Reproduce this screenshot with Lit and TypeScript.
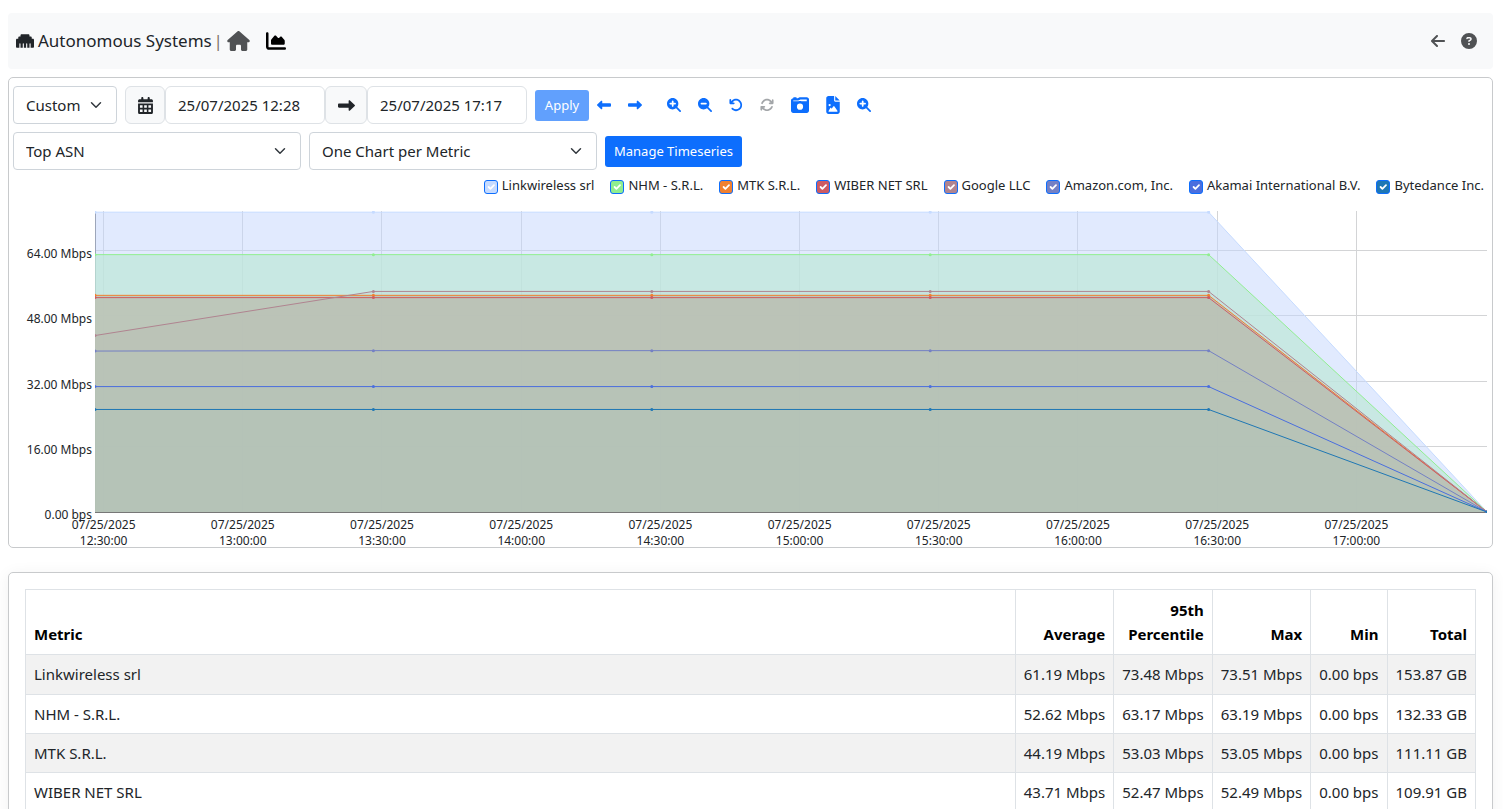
import { LitElement, html, svg, css } from "lit";
import { customElement, property } from "lit/decorators.js";

interface Icon {
  box: string;
  d: string;
}

const LENS =
  "M416 208c0 45.9-14.9 88.3-40 122.7L502.6 457.4c12.5 12.5 12.5 32.8 0 45.3s-32.8 12.5-45.3 0L330.7 376c-34.4 25.2-76.8 40-122.7 40C93.1 416 0 322.9 0 208S93.1 0 208 0S416 93.1 416 208z";

const ICONS: Record<string, Icon> = {
  ethernet: {
    box: "0 64 512 384",
    d: "M0 224V416c0 17.7 14.3 32 32 32H96V336c0-8.8 7.2-16 16-16s16 7.2 16 16V448h64V336c0-8.8 7.2-16 16-16s16 7.2 16 16V448h64V336c0-8.8 7.2-16 16-16s16 7.2 16 16V448h64V336c0-8.8 7.2-16 16-16s16 7.2 16 16V448h64c17.7 0 32-14.3 32-32V224c0-17.7-14.3-32-32-32H448V160c0-17.7-14.3-32-32-32H384V96c0-17.7-14.3-32-32-32H160c-17.7 0-32 14.3-32 32v32H96c-17.7 0-32 14.3-32 32v32H32c-17.7 0-32 14.3-32 32z",
  },
  house: {
    box: "0 0 576 512",
    d: "M575.8 255.5c0 18-15 32.1-32 32.1h-32l.7 160.2c0 2.7-.2 5.4-.5 8.1V472c0 22.1-17.9 40-40 40H456c-1.1 0-2.2 0-3.3-.1c-1.4 .1-2.8 .1-4.2 .1H416 392c-22.1 0-40-17.9-40-40V448 384c0-17.7-14.3-32-32-32H256c-17.7 0-32 14.3-32 32v64 24c0 22.1-17.9 40-40 40H160 128.1c-1.5 0-3-.1-4.5-.2c-1.2 .1-2.4 .2-3.6 .2H104c-22.1 0-40-17.9-40-40V360c0-.9 0-1.9 .1-2.8V287.6H32c-18 0-32-14-32-32.1c0-9 3-17 10-24L266.4 8c7-7 15-8 22-8s15 2 21 7L564.8 231.5c8 7 12 15 11 24z",
  },
  chart: {
    box: "0 0 512 512",
    d: "M64 64c0-17.7-14.3-32-32-32S0 46.3 0 64V400c0 44.2 35.8 80 80 80H480c17.7 0 32-14.3 32-32s-14.3-32-32-32H80c-8.8 0-16-7.2-16-16V64zm96 288H448c17.7 0 32-14.3 32-32V251.8c0-7.6-2.7-15-7.7-20.8l-65.8-76.8c-12.1-14.2-33.7-15-46.9-1.8l-21 21c-10 10-26.4 9.2-35.4-1.6l-39.2-47c-12.6-15.1-35.7-15.4-48.7-.6L135.9 215c-5.1 5.8-7.9 13.3-7.9 21.1v84c0 17.7 14.3 32 32 32z",
  },
  back: {
    box: "0 0 448 512",
    d: "M9.4 233.4c-12.5 12.5-12.5 32.8 0 45.3l160 160c12.5 12.5 32.8 12.5 45.3 0s12.5-32.8 0-45.3L109.2 288 416 288c17.7 0 32-14.3 32-32s-14.3-32-32-32l-306.7 0L214.6 118.6c12.5-12.5 12.5-32.8 0-45.3s-32.8-12.5-45.3 0l-160 160z",
  },
  help: {
    box: "0 0 512 512",
    d: "M256 512A256 256 0 1 0 256 0a256 256 0 1 0 0 512zM169.8 165.3c7.9-22.3 29.1-37.3 52.8-37.3h58.3c34.9 0 63.1 28.3 63.1 63.1c0 22.6-12.1 43.5-31.7 54.8L280 264.4c-.2 13-10.9 23.6-24 23.6c-13.3 0-24-10.7-24-24V250.5c0-8.6 4.6-16.5 12.1-20.8l44.3-25.4c4.7-2.7 7.6-7.7 7.6-13.1c0-8.4-6.8-15.1-15.1-15.1H222.6c-3.4 0-6.4 2.1-7.5 5.3l-.4 1.2c-4.4 12.5-18.2 19-30.6 14.6s-19-18.2-14.6-30.6l.4-1.2zM224 352a32 32 0 1 1 64 0 32 32 0 1 1 -64 0z",
  },
  calendar: {
    box: "0 0 448 512",
    d: "M128 0c17.7 0 32 14.3 32 32V64H288V32c0-17.7 14.3-32 32-32s32 14.3 32 32V64h48c26.5 0 48 21.5 48 48v48H0V112C0 85.5 21.5 64 48 64H96V32c0-17.7 14.3-32 32-32zM0 192H448V464c0 26.5-21.5 48-48 48H48c-26.5 0-48-21.5-48-48V192zM56 252v68h80v-68zM184 252v68h80v-68zM312 252v68h80v-68zM56 380v68h80v-68zM184 380v68h80v-68zM312 380v68h80v-68z",
  },
  left: {
    box: "0 0 512 512",
    d: "M177.5 414c-8.8 3.8-19 2-26-4.6l-144-136C2.7 268.9 0 262.6 0 256s2.7-12.9 7.5-17.4l144-136c7-6.6 17.2-8.4 26-4.6s14.5 12.5 14.5 22l0 72 288 0c17.7 0 32 14.3 32 32l0 64c0 17.7-14.3 32-32 32l-288 0 0 72c0 9.6-5.7 18.2-14.5 22z",
  },
  right: {
    box: "0 0 512 512",
    d: "M334.5 414c8.8 3.8 19 2 26-4.6l144-136c4.8-4.5 7.5-10.8 7.5-17.4s-2.7-12.9-7.5-17.4l-144-136c-7-6.6-17.2-8.4-26-4.6s-14.5 12.5-14.5 22l0 72L32 192c-17.7 0-32 14.3-32 32l0 64c0 17.7 14.3 32 32 32l288 0 0 72c0 9.6 5.7 18.2 14.5 22z",
  },
  zoomIn: {
    box: "0 0 512 512",
    d: LENS + "M176 296c0 17 14 32 32 32s32-15 32-32V240h56c17 0 32-14 32-32s-15-32-32-32H240V120c0-17-14-32-32-32s-32 15-32 32v56H120c-17 0-32 14-32 32s15 32 32 32h56v56z",
  },
  zoomOut: {
    box: "0 0 512 512",
    d: LENS + "M126 176c-17 0-32 14-32 32s15 32 32 32H290c17 0 32-14 32-32s-15-32-32-32H126z",
  },
  undo: {
    box: "0 0 512 512",
    d: "M125.7 160H176c17.7 0 32 14.3 32 32s-14.3 32-32 32H48c-17.7 0-32-14.3-32-32V64c0-17.7 14.3-32 32-32s32 14.3 32 32v51.2L97.6 97.6c87.5-87.5 229.3-87.5 316.8 0s87.5 229.3 0 316.8s-229.3 87.5-316.8 0c-12.5-12.5-12.5-32.8 0-45.3s32.8-12.5 45.3 0c62.5 62.5 163.8 62.5 226.3 0s62.5-163.8 0-226.3s-163.8-62.5-226.3 0L125.7 160z",
  },
  refresh: {
    box: "0 0 512 512",
    d: "M105.1 202.6c7.7-21.8 20.2-42.3 37.8-59.8c62.5-62.5 163.8-62.5 226.3 0L386.3 160H352c-17.7 0-32 14.3-32 32s14.3 32 32 32H463.5h.4c17.7 0 32-14.3 32-32V80c0-17.7-14.3-32-32-32s-32 14.3-32 32v35.2L414.4 97.6c-87.5-87.5-229.3-87.5-316.8 0C73.2 122 55.6 150.7 44.8 181.4c-5.9 16.7 2.9 34.9 19.5 40.8s34.9-2.9 40.8-19.5zM39 289.3c-5 1.5-9.8 4.2-13.7 8.2c-4 4-6.7 8.8-8.1 14c-.3 1.2-.6 2.5-.8 3.8c-.3 1.7-.4 3.4-.4 5.1V432c0 17.7 14.3 32 32 32s32-14.3 32-32V396.9l17.6 17.5c87.5 87.4 229.3 87.4 316.7 0c24.4-24.4 42.1-53.1 52.9-83.7c5.9-16.7-2.9-34.9-19.5-40.8s-34.9 2.9-40.8 19.5c-7.7 21.8-20.2 42.3-37.8 59.8c-62.5 62.5-163.8 62.5-226.3 0L125.6 352H160c17.7 0 32-14.3 32-32s-14.3-32-32-32H48.4c-1.6 0-3.2 .1-4.8 .3s-3.1 .5-4.6 1z",
  },
  camera: {
    box: "0 32 512 448",
    d: "M220.6 121.2L271.1 96 448 96v50H300c-14-4-28-6-44-6s-30 2-44 6H64V128H192c9.9 0 19.7-2.3 28.6-6.8zM0 128V416c0 35.3 28.7 64 64 64H448c35.3 0 64-28.7 64-64V96c0-35.3-28.7-64-64-64H271.1c-9.9 0-19.7 2.3-28.6 6.8L192 64H160V48c0-8.8-7.2-16-16-16H80c-8.8 0-16 7.2-16 16V64C28.7 64 0 92.7 0 128zM168 304a88 88 0 1 1 176 0 88 88 0 1 1 -176 0z",
  },
  image: {
    box: "0 0 384 512",
    d: "M64 0C28.7 0 0 28.7 0 64V448c0 35.3 28.7 64 64 64H320c35.3 0 64-28.7 64-64V160H256c-17.7 0-32-14.3-32-32V0H64zM256 0V128H384L256 0zM64 256a32 32 0 1 1 64 0 32 32 0 1 1 -64 0zm152 32c5.3 0 10.2 2.6 13.2 6.9l88 128c3.4 4.9 3.7 11.3 1 16.5s-8.2 8.6-14.2 8.6H216 176 128 80c-5.8 0-11.1-3.1-13.9-8.1s-2.8-11.2 .2-16.1l48-80c2.9-4.8 8.1-7.8 13.7-7.8s10.8 2.9 13.7 7.8l12.8 21.4 48.3-70.2c3-4.3 7.9-6.9 13.2-6.9z",
  },
};

@customElement("app-icon")
class AppIcon extends LitElement {
  @property() name = "";
  @property({ type: Number }) width = 14;
  @property({ type: Number }) height = 14;

  static styles = css`
    :host {
      display: inline-flex;
    }
    .glyph {
      display: block;
      fill: currentColor;
      fill-rule: evenodd;
    }
  `;

  render() {
    const icon = ICONS[this.name];
    return html`<svg class="glyph" width=${this.width} height=${this.height} viewBox=${icon?.box ?? "0 0 1 1"} aria-hidden="true">
      <path d=${icon?.d ?? ""}></path>
    </svg>`;
  }
}

interface Series {
  name: string;
  color: string;
  values: number[];
}

const level = (first: number, rest = first) => [first, rest, rest, rest, rest, 0];

const SERIES: Series[] = [
  { name: "Linkwireless srl", color: "#c6dbff", values: level(73.4) },
  { name: "NHM - S.R.L.", color: "#90ee90", values: level(63.0) },
  { name: "MTK S.R.L.", color: "#f08030", values: level(53.04) },
  { name: "WIBER NET SRL", color: "#cd5b63", values: level(52.48) },
  { name: "Google LLC", color: "#b08490", values: level(43.2, 54) },
  { name: "Amazon.com, Inc.", color: "#7480c4", values: level(39.4, 39.5) },
  { name: "Akamai International B.V.", color: "#4a6ede", values: level(30.7) },
  { name: "Bytedance Inc.", color: "#1f77b4", values: level(25.1) },
];

const TICKS = ["12:30:00", "13:00:00", "13:30:00", "14:00:00", "14:30:00", "15:00:00", "15:30:00", "16:00:00", "16:30:00", "17:00:00"];
const SCALE = ["64.00 Mbps", "48.00 Mbps", "32.00 Mbps", "16.00 Mbps", "0.00 bps"];

const PLOT_W = 1392;
const PLOT_H = 302;
const xAt = (i: number) => (i * PLOT_W) / 5;
const yAt = (mbps: number) => PLOT_H - 1 - mbps * 4.085;

@customElement("traffic-chart")
class TrafficChart extends LitElement {
  static styles = css`
    :host {
      display: block;
      color: #212529;
    }
    .body {
      display: grid;
      grid-template-columns: 86px minmax(0, 1fr);
      padding-right: 5px;
    }
    .scale {
      display: flex;
      flex-direction: column;
      justify-content: space-between;
      align-items: flex-end;
      padding: 35px 3px 0 0;
      margin-bottom: -10px;
      font-size: 12px;
      line-height: 16px;
    }
    .plot {
      display: block;
      width: 100%;
      height: 302px;
    }
    .plot * {
      vector-effect: non-scaling-stroke;
    }
    .grid {
      stroke: #d3d4d6;
    }
    .axis {
      stroke: #777;
    }
    .line {
      fill: none;
      stroke-width: 1;
    }
    .dot {
      stroke-width: 3;
      stroke-linecap: round;
    }
    .area0 {
      fill: #c3d5fe;
      fill-opacity: 0.5;
    }
    .area1 {
      fill: #bde7d7;
      fill-opacity: 0.7;
    }
    .area2 {
      fill: #bec8ba;
      fill-opacity: 0.92;
    }
    .area3,
    .area4 {
      fill: #a09080;
      fill-opacity: 0.05;
    }
    .area5,
    .area6,
    .area7 {
      fill: #a0c4b4;
      fill-opacity: 0.06;
    }
    .times {
      display: grid;
      grid-template-columns: repeat(10, 1fr);
      padding: 4px 66px 0 25px;
      margin-bottom: -2px;
      text-align: center;
      font-size: 12px;
      line-height: 16px;
    }
    .time {
      display: flex;
      flex-direction: column;
    }
  `;

  private outline(s: Series) {
    return s.values.map((v, i) => `${xAt(i)},${yAt(v).toFixed(2)}`).join(" ");
  }

  render() {
    return html`
      <div class="body">
        <div class="scale">${SCALE.map((t) => html`<span>${t}</span>`)}</div>
        <svg class="plot" viewBox="0 0 ${PLOT_W} ${PLOT_H}" preserveAspectRatio="none" role="img" aria-label="Traffic per autonomous system">
          ${TICKS.map((_, i) => {
            const x = Math.round(8 + i * 139.2) + 0.5;
            return svg`<line class="grid" x1=${x} x2=${x} y1="0" y2=${PLOT_H}></line>`;
          })}
          ${[64, 48, 32, 16].map((v) => {
            const y = Math.floor(yAt(v)) + 0.5;
            return svg`<line class="grid" x1="0" x2=${PLOT_W} y1=${y} y2=${y}></line>`;
          })}
          <line class="axis" x1="0.5" x2="0.5" y1="0" y2=${PLOT_H}></line>
          ${SERIES.map(
            (s, i) => svg`<polygon class=${"area" + i} points=${`0,${PLOT_H - 1} ${this.outline(s)}`}></polygon>`
          )}
          <line class="axis" x1="0" x2=${PLOT_W} y1=${PLOT_H - 0.5} y2=${PLOT_H - 0.5}></line>
          ${SERIES.map(
            (s) => svg`<polyline class="line" stroke=${s.color} points=${this.outline(s)}></polyline>
              ${s.values.map(
                (v, i) => svg`<line class="dot" stroke=${s.color} x1=${xAt(i)} x2=${xAt(i)} y1=${yAt(v)} y2=${yAt(v)}></line>`
              )}`
          )}
        </svg>
      </div>
      <div class="times">
        ${TICKS.map((t) => html`<div class="time"><span>07/25/2025</span><span>${t}</span></div>`)}
      </div>
    `;
  }
}

const COLUMNS = ["Average", "95th Percentile", "Max", "Min", "Total"];
const ROWS = [
  ["Linkwireless srl", "61.19 Mbps", "73.48 Mbps", "73.51 Mbps", "0.00 bps", "153.87 GB"],
  ["NHM - S.R.L.", "52.62 Mbps", "63.17 Mbps", "63.19 Mbps", "0.00 bps", "132.33 GB"],
  ["MTK S.R.L.", "44.19 Mbps", "53.03 Mbps", "53.05 Mbps", "0.00 bps", "111.11 GB"],
  ["WIBER NET SRL", "43.71 Mbps", "52.47 Mbps", "52.49 Mbps", "0.00 bps", "109.91 GB"],
];

const TOOLS: { icon: string; label: string; w: number; h: number; off?: boolean }[] = [
  { icon: "zoomIn", label: "Zoom in", w: 14, h: 14 },
  { icon: "zoomOut", label: "Zoom out", w: 14, h: 14 },
  { icon: "undo", label: "Undo", w: 14, h: 14 },
  { icon: "refresh", label: "Refresh", w: 14, h: 14, off: true },
  { icon: "camera", label: "Snapshots", w: 18, h: 16 },
  { icon: "image", label: "Download image", w: 14, h: 18 },
  { icon: "zoomIn", label: "Explore", w: 14, h: 14 },
];

@customElement("app-root")
class AppRoot extends LitElement {
  static styles = css`
    :host {
      display: block;
      height: 100vh;
      overflow: hidden;
      box-sizing: border-box;
      padding: 13px 10px 0 8px;
      background: #fff;
      color: #212529;
      font-family: "Noto Sans", "Open Sans", sans-serif;
      font-size: 15px;
      line-height: 24px;
    }
    * {
      box-sizing: border-box;
    }
    button,
    input,
    select {
      margin: 0;
      font: inherit;
      color: inherit;
    }
    .header {
      display: flex;
      align-items: center;
      justify-content: space-between;
      height: 56px;
      padding: 0 16px 0 8px;
      border-radius: 4px;
      background: #f8f9fa;
    }
    .title,
    .links {
      display: flex;
      align-items: center;
    }
    .name {
      margin: 0 2px 0 4px;
      font-size: 17px;
      font-weight: 400;
    }
    .divider {
      margin-right: 4px;
      font-size: 16px;
      color: #7b6a5e;
    }
    .link {
      display: inline-flex;
      color: #505254;
    }
    .current {
      margin-left: 16px;
      color: #000;
    }
    .links {
      gap: 16px;
    }
    .card {
      border: 1px solid #c8cacc;
      border-radius: 5px;
      background: #fff;
    }
    .chart {
      margin-top: 8px;
    }
    .row {
      display: flex;
      align-items: center;
      gap: 8px;
      padding: 8px 4px 0;
    }
    .group {
      display: flex;
    }
    .select {
      appearance: none;
      height: 38px;
      padding: 0 36px 0 12px;
      border: 1px solid #ced4da;
      border-radius: 4px;
      background: #fff
        url("data:image/svg+xml,%3Csvg xmlns='http://www.w3.org/2000/svg' viewBox='0 0 16 16'%3E%3Cpath fill='none' stroke='%23343a40' stroke-linecap='round' stroke-linejoin='round' stroke-width='2' d='m2 5 6 6 6-6'/%3E%3C/svg%3E")
        no-repeat right 12px center / 16px 12px;
    }
    .short {
      width: 104px;
    }
    .wide {
      width: 288px;
    }
    .addon {
      display: flex;
      align-items: center;
      justify-content: center;
      width: 42px;
      height: 38px;
      border: 1px solid #dee2e6;
      border-radius: 6px;
      background: #f8f9fa;
    }
    .addon.first {
      width: 40px;
    }
    .date {
      width: 160px;
      height: 38px;
      padding: 0 12px;
      border: 1px solid #dee2e6;
      border-radius: 6px;
      background: #fff;
    }
    .btn {
      min-width: 54px;
      height: 31px;
      padding: 0 9px;
      border: 0;
      border-radius: 3px;
      background: #0d6efd;
      color: #fff;
      font-size: 13px;
    }
    .btn:disabled {
      opacity: 0.65;
    }
    .tools {
      display: flex;
      align-items: center;
      gap: 17px;
    }
    .shift {
      padding-right: 8px;
    }
    .tool {
      display: inline-flex;
      padding: 0;
      border: 0;
      background: none;
      color: #0d6efd;
    }
    .tool:disabled {
      color: #a3a6a9;
    }
    .legend {
      display: flex;
      flex-wrap: wrap;
      justify-content: flex-end;
      gap: 0 16px;
      padding: 6px 8px 16px;
      font-size: 13px;
      line-height: 19px;
    }
    .entry {
      display: flex;
      align-items: center;
      gap: 4px;
    }
    .tick {
      appearance: none;
      width: 14px;
      height: 14px;
      margin-top: 2px;
      border: 1px solid #0d6efd;
      border-radius: 3px;
      background: url("data:image/svg+xml,%3Csvg xmlns='http://www.w3.org/2000/svg' viewBox='0 0 20 20'%3E%3Cpath fill='none' stroke='%23fff' stroke-linecap='round' stroke-linejoin='round' stroke-width='3' d='m6 10 3 3 6-6'/%3E%3C/svg%3E")
        center / 12px 12px no-repeat;
    }
    .summary {
      margin-top: 24px;
      padding: 16px;
      box-shadow: 0 2px 16px rgba(0, 0, 0, 0.06);
    }
    .table {
      width: 100%;
      border-collapse: collapse;
    }
    .table th,
    .table td {
      border: 1px solid #dee2e6;
      padding: 7px 8px;
      text-align: right;
      white-space: nowrap;
    }
    .table th {
      padding: 8px;
      vertical-align: bottom;
      white-space: normal;
      color: #000;
      font-weight: 700;
    }
    .table .metric {
      width: 100%;
      text-align: left;
    }
    .table tbody tr:nth-child(odd) {
      background: #f2f2f2;
    }
    .table tbody tr:first-child td {
      padding-bottom: 8px;
    }
  `;

  private tool(icon: string, label: string, w = 14, h = 14, off = false) {
    return html`<button class="tool" type="button" aria-label=${label} ?disabled=${off}>
      <app-icon name=${icon} width=${w} height=${h}></app-icon>
    </button>`;
  }

  render() {
    return html`
      <header class="header">
        <div class="title">
          <app-icon name="ethernet" width="18" height="14"></app-icon>
          <h1 class="name">Autonomous Systems</h1>
          <span class="divider">|</span>
          <a class="link" href="#" aria-label="Home"><app-icon name="house" width="23" height="20"></app-icon></a>
          <a class="link current" href="#" aria-label="Chart"><app-icon name="chart" width="20" height="20"></app-icon></a>
        </div>
        <nav class="links">
          <a class="link" href="#" aria-label="Back"><app-icon name="back" width="14" height="16"></app-icon></a>
          <a class="link" href="#" aria-label="Help"><app-icon name="help" width="16" height="16"></app-icon></a>
        </nav>
      </header>

      <section class="card chart">
        <div class="row">
          <select class="select short" aria-label="Time range"><option>Custom</option></select>
          <div class="group">
            <span class="addon first"><app-icon name="calendar" width="15" height="17"></app-icon></span>
            <input class="date" type="text" aria-label="Begin" value="25/07/2025 12:28" />
            <span class="addon"><app-icon name="right" width="17" height="17"></app-icon></span>
            <input class="date" type="text" aria-label="End" value="25/07/2025 17:17" />
          </div>
          <button class="btn" type="button" disabled>Apply</button>
          <div class="tools">
            <div class="tools shift">${this.tool("left", "Back in time")}${this.tool("right", "Forward in time")}</div>
            ${TOOLS.map((t) => this.tool(t.icon, t.label, t.w, t.h, t.off))}
          </div>
        </div>
        <div class="row">
          <select class="select wide" aria-label="Timeseries"><option>Top ASN</option></select>
          <select class="select wide" aria-label="Layout"><option>One Chart per Metric</option></select>
          <button class="btn" type="button">Manage Timeseries</button>
        </div>
        <div class="legend">
          ${SERIES.map(
            (s) => html`<label class="entry">
              <input class="tick" type="checkbox" checked style="background-color: ${s.color}" />${s.name}
            </label>`
          )}
        </div>
        <traffic-chart></traffic-chart>
      </section>

      <section class="card summary">
        <table class="table">
          <thead>
            <tr>
              <th class="metric" scope="col">Metric</th>
              ${COLUMNS.map((c) => html`<th scope="col">${c}</th>`)}
            </tr>
          </thead>
          <tbody>
            ${ROWS.map(
              (r) => html`<tr>
                ${r.map((c, i) => html`<td class=${i === 0 ? "metric" : "value"}>${c}</td>`)}
              </tr>`
            )}
          </tbody>
        </table>
      </section>
    `;
  }
}
